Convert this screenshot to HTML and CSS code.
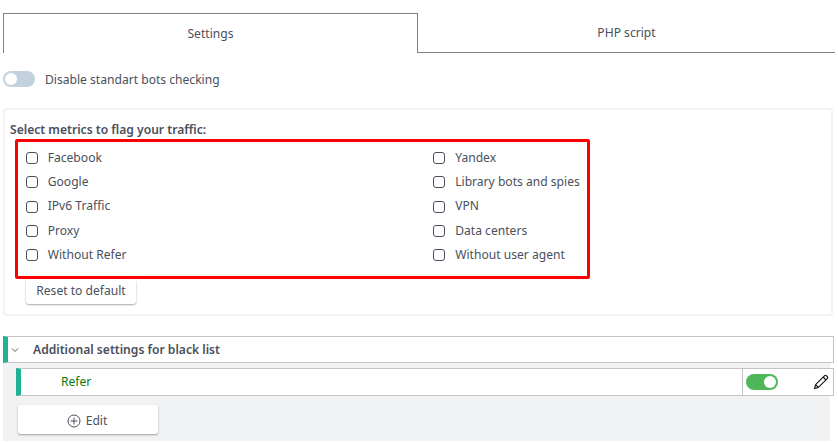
FILE: index.html
```html
<!DOCTYPE html>
<html lang="en">
<head>
  <meta charset="UTF-8" />
  <title>Traffic settings</title>
  <link rel="stylesheet" href="styles.css">
</head>
<body>
  <div class="tabs">
    <div class="tab active">Settings</div>
    <div class="tab">PHP script</div>
  </div>

  <div class="switch-row">
    <span class="switch"><span class="knob"></span></span>
    <span>Disable standart bots checking</span>
  </div>

  <div class="panel">
    <div class="panel-title">Select metrics to flag your traffic:</div>
    <div class="metrics">
      <label class="metric"><span class="box"></span>Facebook</label>
      <label class="metric"><span class="box"></span>Yandex</label>
      <label class="metric"><span class="box"></span>Google</label>
      <label class="metric"><span class="box"></span>Library bots and spies</label>
      <label class="metric"><span class="box"></span>IPv6 Traffic</label>
      <label class="metric"><span class="box"></span>VPN</label>
      <label class="metric"><span class="box"></span>Proxy</label>
      <label class="metric"><span class="box"></span>Data centers</label>
      <label class="metric"><span class="box"></span>Without Refer</label>
      <label class="metric"><span class="box"></span>Without user agent</label>
    </div>
    <button class="btn reset">Reset to default</button>
  </div>

  <div class="acc-head">
    <svg class="chevron" width="8" height="6" viewBox="0 0 8 6"><path d="M1 1.5 L4 4.5 L7 1.5" fill="none" stroke="#555" stroke-width="1"/></svg>
    <span>Additional settings for black list</span>
  </div>
  <div class="acc-body">
    <div class="rule">
      <div class="rule-name">Refer</div>
      <div class="rule-actions">
        <span class="switch on"><span class="knob"></span></span>
        <svg class="pencil" width="16" height="16" viewBox="0 0 16 16"><path d="M1.5 14.5 L2.6 10.6 L11.4 1.8 C12 1.2 12.9 1.2 13.5 1.8 L14.2 2.5 C14.8 3.1 14.8 4 14.2 4.6 L5.4 13.4 Z M10.2 3 L13 5.8 M2.6 10.6 L5.4 13.4" fill="none" stroke="#111" stroke-width="1.1" stroke-linejoin="round"/></svg>
      </div>
    </div>
    <button class="btn edit">
      <svg width="14" height="14" viewBox="0 0 14 14"><circle cx="7" cy="7" r="6" fill="none" stroke="#4a4f5c" stroke-width="1"/><path d="M7 3.5 V10.5 M3.5 7 H10.5" stroke="#4a4f5c" stroke-width="1"/></svg>
      Edit
    </button>
  </div>
</body>
</html>
```

FILE: styles.css
```css
body {
  margin: 0;
  padding: 13px 3px 0;
  background-color: #ffffff;
  font-family: "Noto Sans", "Open Sans", sans-serif;
  font-size: 12.1px;
  color: #4a4f5c;
}

.tabs {
  display: flex;
  width: 832px;
  height: 40px;
}

.tab {
  flex: 1;
  display: flex;
  align-items: center;
  justify-content: center;
  border-bottom: 1px solid #808080;
}

.tab.active {
  flex: 0 0 415px;
  box-sizing: border-box;
  border: 1px solid #808080;
  border-bottom: none;
}

.switch-row {
  display: flex;
  align-items: center;
  gap: 10px;
  height: 16px;
  margin-top: 18px;
}

.switch {
  display: flex;
  align-items: center;
  width: 32px;
  height: 16px;
  border-radius: 8px;
  background-color: #c3d1de;
}

.knob {
  width: 12px;
  height: 12px;
  margin-left: 2px;
  border-radius: 50%;
  background-color: #ffffff;
}

.switch.on {
  justify-content: flex-end;
  background-color: #4fb75a;
}

.switch.on .knob {
  margin: 0 2px 0 0;
}

.panel {
  box-sizing: border-box;
  width: 830px;
  height: 208px;
  margin-top: 21px;
  padding: 11px 5px 0;
  border: 2px solid #f3f3f3;
  border-radius: 3px;
}

.panel-title {
  height: 18px;
  line-height: 17px;
  font-weight: 600;
}

.metrics {
  box-sizing: border-box;
  display: grid;
  grid-template-columns: 407.5px 1fr;
  grid-auto-rows: 24.3px;
  width: 575px;
  height: 140px;
  margin: 0 0 0 5px;
  padding: 3px 0 0 7.7px;
  border: 3px solid #ff0000;
  border-radius: 2px;
}

.metric {
  display: flex;
  align-items: center;
  gap: 10px;
}

.box {
  box-sizing: border-box;
  width: 12px;
  height: 12px;
  margin-top: 2px;
  border: 1px solid #4a4f5c;
  border-radius: 3px;
}

.btn {
  display: flex;
  align-items: center;
  justify-content: center;
  gap: 5px;
  box-sizing: border-box;
  border: none;
  border-radius: 3px;
  background-color: #ffffff;
  color: #4a4f5c;
  font-family: inherit;
  font-size: 12.1px;
  box-shadow: 0 1px 2px rgba(0, 0, 0, 0.35);
}

.reset {
  width: 110px;
  height: 25px;
  margin: 0 0 0 16px;
  padding-bottom: 4px;
}

.acc-head {
  box-sizing: border-box;
  display: flex;
  align-items: center;
  width: 831px;
  height: 27px;
  margin-top: 20px;
  border: 1px solid #c4c4c4;
  border-left: 5px solid #1fb394;
  font-weight: 600;
}

.chevron {
  margin: 0 14px 0 3px;
}

.acc-body {
  width: 827px;
  height: 78px;
  padding: 5px 0 0 13px;
  box-sizing: border-box;
  background-color: #f1f2f4;
}

.rule {
  box-sizing: border-box;
  display: flex;
  width: 818px;
  height: 28px;
  border: 1px solid #c4c4c4;
  border-left: 5px solid #1fb394;
  background-color: #ffffff;
}

.rule-name {
  flex: 1;
  display: flex;
  align-items: center;
  padding: 0 0 2px 40px;
  color: #0a7a0a;
}

.rule-actions {
  box-sizing: border-box;
  display: flex;
  align-items: center;
  justify-content: space-between;
  width: 91px;
  padding: 0 4px 0 3px;
  border-left: 1px solid #c4c4c4;
}

.edit {
  width: 140px;
  height: 29px;
  margin: 9px 0 0 2px;
  padding: 2px 2px 0 0;
}
```
